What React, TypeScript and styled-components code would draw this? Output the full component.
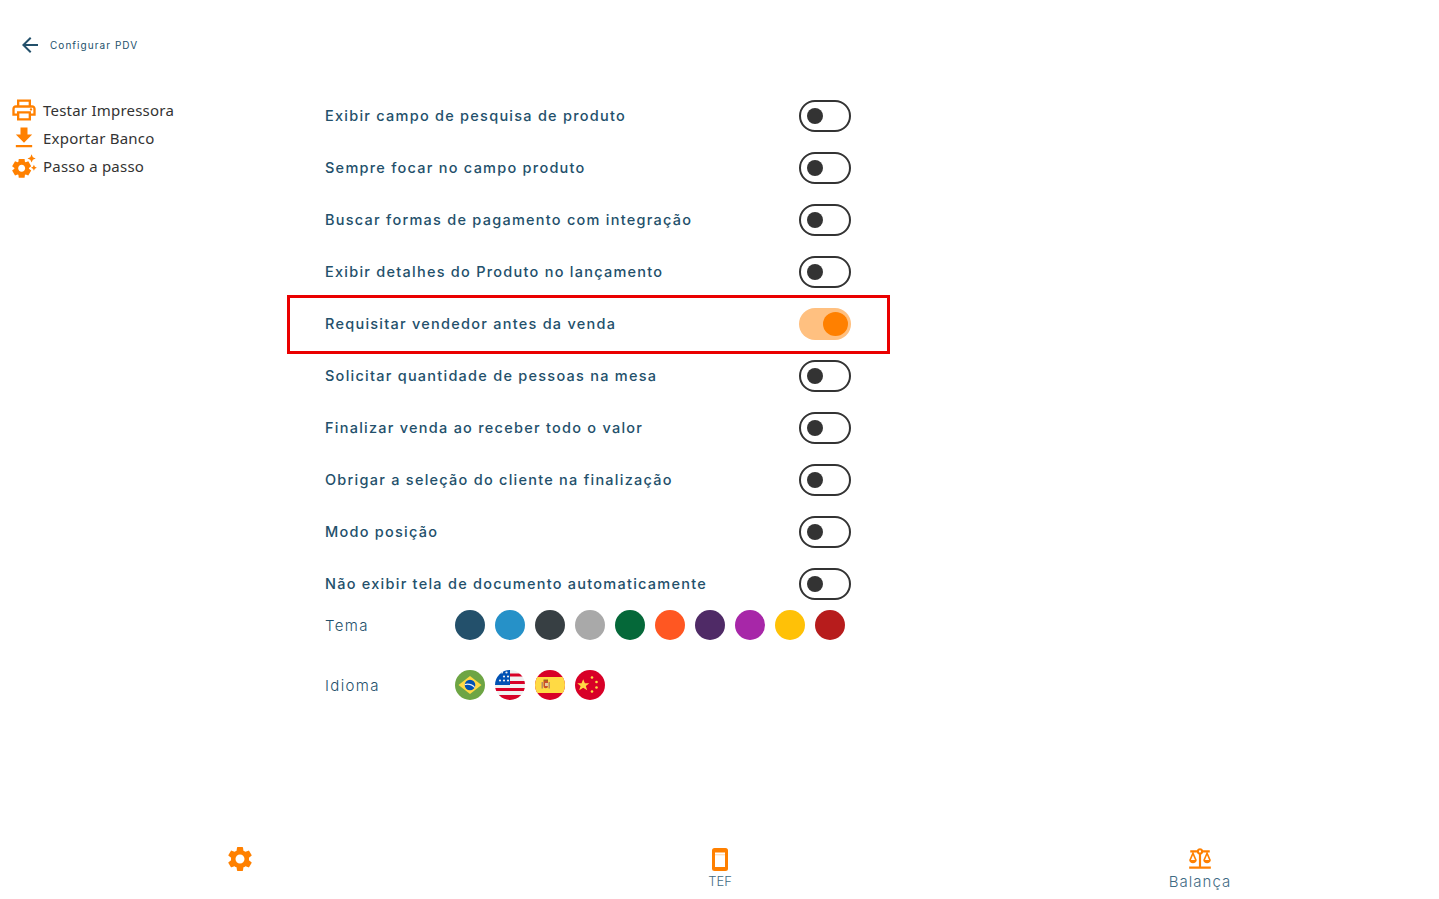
import React from "react";
import styled, { createGlobalStyle } from "styled-components";
import { MdArrowBack, MdOutlineLocalPrintshop, MdFileDownload, MdSettingsSuggest, MdSettings, MdBalance } from "react-icons/md";

const Global = createGlobalStyle`
  html, body { margin: 0; padding: 0; background: #fff; overflow: hidden; }
  * { box-sizing: border-box; }
`;
const ORANGE = "#ff8000";
const NAVY = "#23506b";

const Page = styled.div`
  height: 899px;
  display: flex;
  flex-direction: column;
  font-family: Inter, "Liberation Sans", sans-serif;
  color: ${NAVY};
`;
const Header = styled.header`
  height: 90px;
  display: flex;
  align-items: center;
  gap: 8px;
  padding-left: 18px;
`;
const Title = styled.span`
  font-size: 10px;
  letter-spacing: 1.05px;
  font-weight: 400;
`;
const Body = styled.div`
  flex: 1;
  display: flex;
`;
const Side = styled.nav`
  width: 290px;
  padding: 6px 0 0 10px;
  display: flex;
  flex-direction: column;
`;
const SideItem = styled.div`
  height: 28px;
  display: flex;
  align-items: center;
  gap: 5px;
  font-family: "Noto Sans", "Open Sans", sans-serif;
  font-size: 15px;
  letter-spacing: 0.22px;
  color: #333;
  svg { color: ${ORANGE}; flex: none; }
`;
const Main = styled.main`
  width: 597px;
  display: flex;
  flex-direction: column;
`;
const Row = styled.div<{ $hi?: boolean }>`
  position: relative;
  height: 52px;
  padding: 0 36px 0 35px;
  display: flex;
  align-items: center;
  justify-content: space-between;
  ${(p) =>
    p.$hi
      ? `&::after {
          content: "";
          position: absolute;
          inset: -3px -3px -4px -3px;
          border: 3px solid #ea0000;
          pointer-events: none;
        }`
      : ""}
`;
const Label = styled.span`
  font-size: 14.5px;
  font-weight: 500;
  letter-spacing: 1.25px;
  white-space: nowrap;
  margin-bottom: 1px;
`;
const Toggle = styled.span<{ $on?: boolean }>`
  width: 52px;
  height: 32px;
  border-radius: 16px;
  flex: none;
  display: flex;
  align-items: center;
  justify-content: ${(p) => (p.$on ? "flex-end" : "flex-start")};
  padding: ${(p) => (p.$on ? "0 3px 0 0" : "0 0 0 6px")};
  border: ${(p) => (p.$on ? "none" : "2px solid #333")};
  background: ${(p) => (p.$on ? "#ffc080" : "#fff")};
`;
const Thumb = styled.span<{ $on?: boolean }>`
  width: ${(p) => (p.$on ? 25 : 16)}px;
  height: ${(p) => (p.$on ? 24 : 16)}px;
  border-radius: 50%;
  background: ${(p) => (p.$on ? ORANGE : "#333")};
`;
const Swatches = styled.div<{ $mb?: number }>`
  height: 30px;
  margin-bottom: ${(p) => p.$mb ?? 0}px;
  padding-left: 35px;
  display: flex;
  align-items: center;
`;
const SwatchLabel = styled.span`
  width: 130px;
  font-size: 15px;
  font-weight: 300;
  letter-spacing: 1.35px;
`;
const Dots = styled.div`
  display: flex;
  gap: 10px;
`;
const Dot = styled.span<{ $c: string }>`
  width: 30px;
  height: 30px;
  border-radius: 50%;
  background: ${(p) => p.$c};
`;
const Flag = styled.svg`
  width: 30px;
  height: 30px;
  display: block;
`;
const Bottom = styled.footer`
  height: 63px;
  display: grid;
  grid-template-columns: repeat(3, 480px);
`;
const Tab = styled.div`
  padding-top: 9px;
  display: flex;
  flex-direction: column;
  align-items: center;
  color: #3f6b84;
`;
const TabIcon = styled.span`
  height: 28px;
  display: flex;
  align-items: center;
  color: ${ORANGE};
`;
const TabText = styled.span<{ $tight?: boolean }>`
  font-size: ${(p) => (p.$tight ? 13 : 15)}px;
  font-weight: 300;
  letter-spacing: ${(p) => (p.$tight ? 0 : 1)}px;
  line-height: 17px;
`;

const rows = [
  "Exibir campo de pesquisa de produto",
  "Sempre focar no campo produto",
  "Buscar formas de pagamento com integração",
  "Exibir detalhes do Produto no lançamento",
  "Requisitar vendedor antes da venda",
  "Solicitar quantidade de pessoas na mesa",
  "Finalizar venda ao receber todo o valor",
  "Obrigar a seleção do cliente na finalização",
  "Modo posição",
  "Não exibir tela de documento automaticamente",
];
const colors = ["#23506b", "#2691c8", "#373f43", "#a9a9a9", "#056839", "#ff5722", "#4f2a66", "#a727a8", "#ffc107", "#b71c1c"];

const Clip = ({ id }: { id: string }) => (
  <clipPath id={id}><circle cx="15" cy="15" r="15" /></clipPath>
);

const Brazil = () => (
  <Flag viewBox="0 0 30 30">
    <circle cx="15" cy="15" r="15" fill="#6da544" />
    <polygon points="15,5.9 26.5,15 15,24.1 3.5,15" fill="#ffda44" />
    <circle cx="15" cy="15" r="5.3" fill="#0052b4" />
    <path d="M9.8 13.9a11 11 0 0 1 10.2 3l-.6 1.2a10 10 0 0 0-9.8-2.9Z" fill="#f0f0f0" />
  </Flag>
);
const Usa = () => (
  <Flag viewBox="0 0 30 30">
    <Clip id="us" />
    <g clipPath="url(#us)">
      <rect width="30" height="30" fill="#f0f0f0" />
      <rect x="14" y="3.5" width="16" height="3" fill="#d80027" />
      <rect x="14" y="11" width="16" height="3" fill="#d80027" />
      <rect y="18" width="30" height="3" fill="#d80027" />
      <rect y="25" width="30" height="5" fill="#d80027" />
      <rect width="15" height="15" fill="#0052b4" />
      {[[7, 2.5], [11.5, 2.5], [9, 6.5], [13, 6.5], [5, 10.5], [9, 10.5], [13, 10.5]].map(([x, y]) => (
        <circle key={`${x}-${y}`} cx={x} cy={y} r="1.1" fill="#f0f0f0" />
      ))}
    </g>
  </Flag>
);
const Spain = () => (
  <Flag viewBox="0 0 30 30">
    <Clip id="es" />
    <g clipPath="url(#es)">
      <rect width="30" height="30" fill="#d80027" />
      <rect y="7" width="30" height="16" fill="#ffda44" />
      <rect x="6.5" y="12" width="1.5" height="6.5" fill="#b98a62" />
      <rect x="13.5" y="12" width="1.5" height="6.5" fill="#b98a62" />
      <path d="M8.5 11h4.5v5a2.2 2.2 0 0 1-4.5 0Z" fill="#c8502a" />
      <rect x="8.5" y="9.5" width="4.5" height="1.5" fill="#a2631f" />
      <rect x="10" y="13" width="3" height="3" fill="#e8c8a0" />
    </g>
  </Flag>
);
const China = () => (
  <Flag viewBox="0 0 30 30">
    <circle cx="15" cy="15" r="15" fill="#d80027" />
    <polygon points="8.2,9.2 9.9,13.3 14.3,13.3 10.8,16 12.2,20.3 8.2,17.7 4.2,20.3 5.6,16 2.2,13.3 6.5,13.3" fill="#ffda44" />
    <circle cx="17" cy="7.5" r="1.3" fill="#ffda44" />
    <circle cx="21.5" cy="12" r="1.3" fill="#ffda44" />
    <circle cx="21.5" cy="17.5" r="1.3" fill="#ffda44" />
    <circle cx="17" cy="21.5" r="1.3" fill="#ffda44" />
  </Flag>
);
const Tablet = () => (
  <svg width="16" height="23" viewBox="0 0 16 23">
    <rect width="16" height="23" rx="2.5" fill={ORANGE} />
    <rect x="3" y="4.5" width="10" height="14.5" fill="#fff" />
    <rect x="3" y="6.5" width="10" height="0.7" fill="#ffc080" />
  </svg>
);

export default function App() {
  return (
    <Page>
      <Global />
      <Header>
        <MdArrowBack size={24} />
        <Title>Configurar PDV</Title>
      </Header>
      <Body>
        <Side>
          <SideItem><MdOutlineLocalPrintshop size={28} />Testar Impressora</SideItem>
          <SideItem><MdFileDownload size={28} />Exportar Banco</SideItem>
          <SideItem><MdSettingsSuggest size={28} />Passo a passo</SideItem>
        </Side>
        <Main>
          {rows.map((r, i) => (
            <Row key={r} $hi={i === 4}>
              <Label>{r}</Label>
              <Toggle $on={i === 4}><Thumb $on={i === 4} /></Toggle>
            </Row>
          ))}
          <Swatches $mb={30}>
            <SwatchLabel>Tema</SwatchLabel>
            <Dots>{colors.map((c) => <Dot key={c} $c={c} />)}</Dots>
          </Swatches>
          <Swatches>
            <SwatchLabel>Idioma</SwatchLabel>
            <Dots><Brazil /><Usa /><Spain /><China /></Dots>
          </Swatches>
        </Main>
      </Body>
      <Bottom>
        <Tab><TabIcon><MdSettings size={30} /></TabIcon></Tab>
        <Tab><TabIcon><Tablet /></TabIcon><TabText $tight>TEF</TabText></Tab>
        <Tab><TabIcon><MdBalance size={26} /></TabIcon><TabText>Balança</TabText></Tab>
      </Bottom>
    </Page>
  );
}
